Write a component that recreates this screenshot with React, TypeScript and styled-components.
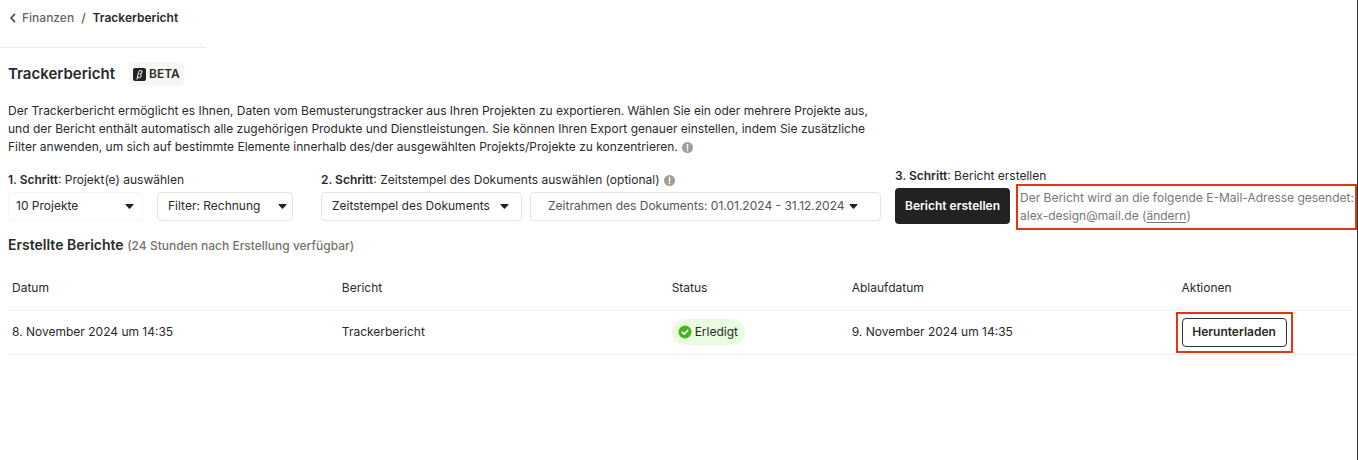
import React from "react";
import styled, { createGlobalStyle } from "styled-components";

const GlobalStyle = createGlobalStyle`
  * { box-sizing: border-box; }
  html, body { margin: 0; padding: 0; background: #fff; }
  body, button, select {
    font-family: Inter, "Liberation Sans", sans-serif;
    font-size: 12px;
    line-height: 18px;
    color: #2a2a2a;
  }
  h1, h2, p { margin: 0; }
  strong { font-weight: 600; }
`;

const Page = styled.div`
  min-height: 100vh;
  border-right: 1px solid #2b3036;
  overflow-x: hidden;
`;

const Breadcrumb = styled.nav`
  display: flex;
  align-items: center;
  gap: 7px;
  width: 206px;
  height: 48px;
  padding: 0 8px 11px;
  border-bottom: 1px solid #ececec;
  font-weight: 600;
  white-space: nowrap;
`;

const BackLink = styled.a`
  display: flex;
  align-items: center;
  gap: 4px;
  color: #666;
  font-weight: 500;
  text-decoration: none;
`;

const Separator = styled.span`
  color: #555;
  font-weight: 500;
`;

const Main = styled.main`
  padding: 14px 0 0 8px;
`;

const TitleRow = styled.div`
  display: flex;
  align-items: center;
  gap: 14px;
  height: 24px;
`;

const Title = styled.h1`
  font-size: 15px;
  line-height: 24px;
  font-weight: 600;
`;

const BetaBadge = styled.span`
  display: inline-flex;
  align-items: center;
  gap: 3px;
  height: 24px;
  padding: 0 4px;
  border-radius: 4px;
  background: #f8f6f4;
  font-weight: 600;
`;

const Intro = styled.p`
  max-width: 868px;
  margin-top: 16px;
`;

const InfoSvg = styled.svg`
  width: 11px;
  height: 11px;
  margin-left: 4px;
  vertical-align: -2px;
`;

const Steps = styled.div`
  display: flex;
  align-items: center;
  margin-top: 11px;
  white-space: nowrap;
`;

const Step = styled.section<{ $gapAfter?: number; $grow?: boolean }>`
  display: flex;
  flex-direction: column;
  gap: 3px;
  flex: ${(p) => (p.$grow ? "1 0 auto" : "none")};
  margin-right: ${(p) => p.$gapAfter ?? 0}px;
`;

const Controls = styled.div<{ $gap: number }>`
  display: flex;
  gap: ${(p) => p.$gap}px;
`;

const SelectBox = styled.div<{ $width: number; $soft?: boolean }>`
  position: relative;
  width: ${(p) => p.$width}px;
  height: 29px;
  border: 1px solid ${(p) => (p.$soft ? "#f4f4f4" : "#e6e4de")};
  border-radius: 4px;
`;

const Select = styled.select<{ $indent: number }>`
  width: 100%;
  height: 100%;
  padding: 0 24px 0 ${(p) => p.$indent}px;
  border: 0;
  appearance: none;
  background: transparent;
`;

const CaretSvg = styled.svg`
  width: 9px;
  height: 5px;
  flex: none;
`;

const SelectCaret = styled.span<{ $right: number }>`
  position: absolute;
  top: 0;
  bottom: 0;
  right: ${(p) => p.$right}px;
  display: flex;
  align-items: center;
  pointer-events: none;
`;

const RangeButton = styled.button`
  display: flex;
  align-items: center;
  justify-content: space-between;
  width: 351px;
  height: 29px;
  padding: 0 22px 0 17px;
  border: 1px solid #e6e4de;
  border-radius: 4px;
  background: #fff;
  color: #555;
`;

const PrimaryButton = styled.button`
  width: 115px;
  height: 36px;
  padding: 0;
  border: 0;
  border-radius: 4px;
  background: #222;
  color: #fff;
  font-weight: 600;
`;

const Note = styled.p`
  flex: 1;
  height: 46px;
  margin: -4px 0 -6px;
  padding: 3px 0 3px 2px;
  border: 2px solid #e3350f;
  color: #777;
`;

const NoteLink = styled.a`
  color: inherit;
  text-underline-offset: 2px;
`;

const SectionTitle = styled.h2`
  margin-top: 12px;
  font-size: 14px;
  line-height: 18px;
  font-weight: 600;
`;

const Hint = styled.span`
  color: #74736c;
  font-size: 12px;
  font-weight: 500;
`;

const Table = styled.table`
  width: 100%;
  margin-top: 12px;
  border-collapse: collapse;
  table-layout: fixed;
  text-align: left;
`;

const Column = styled.col<{ $share?: number }>`
  width: ${(p) => (p.$share ? `${p.$share}%` : "auto")};
`;

const Th = styled.th`
  height: 43px;
  padding: 0 4px;
  border-bottom: 1px solid #f3f3f3;
  font-weight: 400;
`;

const Td = styled.td`
  height: 44px;
  padding: 0 4px;
  border-bottom: 1px solid #f3f3f3;
`;

const StatusPill = styled.span`
  display: inline-flex;
  align-items: center;
  gap: 3px;
  height: 26px;
  padding: 0 7px 0 6px;
  border-radius: 13px;
  background: #e9fbe0;
`;

const Highlight = styled.span`
  display: inline-block;
  outline: 2px solid #e3350f;
  outline-offset: 4px;
  vertical-align: middle;
`;

const OutlineButton = styled.button`
  display: block;
  width: 105px;
  height: 29px;
  padding: 0;
  border: 1px solid #333;
  border-radius: 4px;
  background: #fff;
  font-weight: 600;
`;

const Caret = () => (
  <CaretSvg viewBox="0 0 9 5" aria-hidden="true">
    <path d="M.9 0h7.2q.8 0 .3.7L5.1 4.5q-.6.6-1.2 0L.6.7Q.1 0 .9 0z" fill="#222" />
  </CaretSvg>
);

const Info = () => (
  <InfoSvg viewBox="0 0 11 11" role="img" aria-label="Information">
    <circle cx="5.5" cy="5.5" r="5.5" fill="#a39c90" />
    <path d="M5.5 2.4v3.8" stroke="#fff" strokeWidth="1.5" strokeLinecap="round" />
    <circle cx="5.5" cy="8.4" r=".9" fill="#fff" />
  </InfoSvg>
);

const BetaIcon = () => (
  <svg width="13" height="13" viewBox="0 0 13 13" aria-hidden="true">
    <rect width="13" height="13" rx="2" fill="#222" />
    <path
      d="M4 11.2 5.6 4.2Q6 2.4 7.6 2.4T9 4Q8.9 5.8 6.8 6q1.8.2 1.5 1.9Q7.9 9.7 6.3 9.7 5.2 9.7 4.8 8.7"
      fill="none"
      stroke="#fff"
      strokeWidth="1"
      strokeLinecap="round"
    />
  </svg>
);

type DropdownProps = { label: string; value: string; width: number; indent: number; caret: number; soft?: boolean };

const Dropdown = ({ label, value, width, indent, caret, soft }: DropdownProps) => (
  <SelectBox $width={width} $soft={soft}>
    <Select aria-label={label} $indent={indent} defaultValue={value}>
      <option>{value}</option>
    </Select>
    <SelectCaret $right={caret}>
      <Caret />
    </SelectCaret>
  </SelectBox>
);

const columns = [
  { name: "Datum", share: 24.45 },
  { name: "Bericht", share: 24.45 },
  { name: "Status", share: 13.35 },
  { name: "Ablaufdatum", share: 24.45 },
  { name: "Aktionen" },
];

export default function App() {
  return (
    <Page>
      <GlobalStyle />
      <Breadcrumb aria-label="Brotkrümel">
        <BackLink href="#finanzen">
          <svg width="10" height="10" viewBox="0 0 10 10" aria-hidden="true">
            <path d="M6.6 1.4 3 5l3.6 3.6" fill="none" stroke="#444" strokeWidth="1.5" strokeLinecap="round" strokeLinejoin="round" />
          </svg>
          Finanzen
        </BackLink>
        <Separator>/</Separator>
        <span aria-current="page">Trackerbericht</span>
      </Breadcrumb>
      <Main>
        <TitleRow>
          <Title>Trackerbericht</Title>
          <BetaBadge>
            <BetaIcon />
            BETA
          </BetaBadge>
        </TitleRow>
        <Intro>
          Der Trackerbericht ermöglicht es Ihnen, Daten vom Bemusterungstracker aus Ihren Projekten zu exportieren.
          Wählen Sie ein oder mehrere Projekte aus, und der Bericht enthält automatisch alle zugehörigen Produkte und
          Dienstleistungen. Sie können Ihren Export genauer einstellen, indem Sie zusätzliche Filter anwenden, um sich
          auf bestimmte Elemente innerhalb des/der ausgewählten Projekts/Projekte zu konzentrieren.
          <Info />
        </Intro>
        <Steps>
          <Step $gapAfter={28}>
            <div>
              <strong>1. Schritt</strong>: Projekt(e) auswählen
            </div>
            <Controls $gap={14}>
              <Dropdown label="Projekte" value="10 Projekte" width={135} indent={7} caret={8} soft />
              <Dropdown label="Filter" value="Filter: Rechnung" width={136} indent={10} caret={5} />
            </Controls>
          </Step>
          <Step $gapAfter={14}>
            <div>
              <strong>2. Schritt</strong>: Zeitstempel des Dokuments auswählen (optional)
              <Info />
            </div>
            <Controls $gap={8}>
              <Dropdown label="Zeitstempel" value="Zeitstempel des Dokuments" width={201} indent={10} caret={12} />
              <RangeButton>
                Zeitrahmen des Dokuments: 01.01.2024 - 31.12.2024
                <Caret />
              </RangeButton>
            </Controls>
          </Step>
          <Step $grow>
            <div>
              <strong>3. Schritt</strong>: Bericht erstellen
            </div>
            <Controls $gap={6}>
              <PrimaryButton>Bericht erstellen</PrimaryButton>
              <Note>
                Der Bericht wird an die folgende E-Mail-Adresse gesendet:
                <br />
                alex-design@mail.de (<NoteLink href="#email">ändern</NoteLink>)
              </Note>
            </Controls>
          </Step>
        </Steps>
        <SectionTitle>
          Erstellte Berichte <Hint>(24 Stunden nach Erstellung verfügbar)</Hint>
        </SectionTitle>
        <Table>
          <colgroup>
            {columns.map((c) => (
              <Column key={c.name} $share={c.share} />
            ))}
          </colgroup>
          <thead>
            <tr>
              {columns.map((c) => (
                <Th key={c.name} scope="col">
                  {c.name}
                </Th>
              ))}
            </tr>
          </thead>
          <tbody>
            <tr>
              <Td>8. November 2024 um 14:35</Td>
              <Td>Trackerbericht</Td>
              <Td>
                <StatusPill>
                  <svg width="14" height="14" viewBox="0 0 14 14" aria-hidden="true">
                    <circle cx="7" cy="7" r="6.5" fill="#46b41c" />
                    <path d="m4.2 7.2 2 1.9 3.6-3.8" fill="none" stroke="#fff" strokeWidth="1.6" strokeLinecap="round" strokeLinejoin="round" />
                  </svg>
                  Erledigt
                </StatusPill>
              </Td>
              <Td>9. November 2024 um 14:35</Td>
              <Td>
                <Highlight>
                  <OutlineButton>Herunterladen</OutlineButton>
                </Highlight>
              </Td>
            </tr>
          </tbody>
        </Table>
      </Main>
    </Page>
  );
}
